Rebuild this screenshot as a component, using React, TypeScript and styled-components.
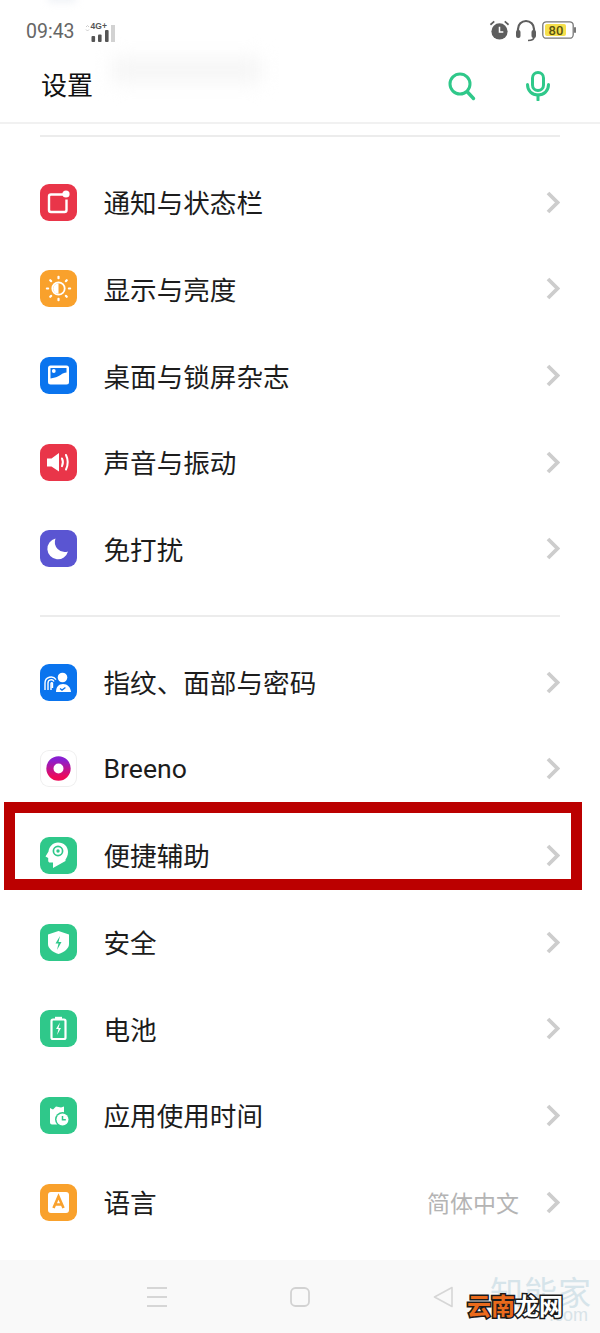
import React from "react";
import styled, { createGlobalStyle } from "styled-components";

const Global = createGlobalStyle`
  html, body { margin: 0; padding: 0; background: #fff; }
  * { box-sizing: border-box; }
`;

const FONT = `"Noto Sans CJK SC", "Noto Sans", sans-serif`;
const GREEN = "#2fc88a";

const Page = styled.div`
  position: relative;
  width: 600px;
  height: 1333px;
  overflow: hidden;
  display: flex;
  flex-direction: column;
  background: #fff;
  font-family: ${FONT};
`;
const StatusBar = styled.div`
  flex: none;
  height: 60px;
  padding: 2px 24px 0 26px;
  display: flex;
  align-items: center;
  justify-content: space-between;
`;
const StatusLeft = styled.div`
  display: flex;
  align-items: center;
  gap: 10px;
`;
const StatusRight = styled.div`
  display: flex;
  align-items: center;
  gap: 5px;
  margin-top: -2px;
`;
const Time = styled.span`
  font: 19.5px "Roboto", sans-serif;
  color: #666;
  margin-top: 1px;
`;
const Signal = styled.div`
  position: relative;
  width: 30px;
  height: 18px;
  margin-top: 1px;
`;
const SignalLabel = styled.span`
  position: absolute;
  left: 6px;
  top: -1px;
  font: bold 8.5px/9px "Liberation Sans", sans-serif;
  color: #555;
`;
const Header = styled.header`
  flex: none;
  height: 64px;
  padding: 0 50px 10px 41px;
  display: flex;
  align-items: center;
  justify-content: space-between;
  border-bottom: 2px solid #f1f1f1;
`;
const Title = styled.h1`
  margin: 0 0 4px;
  font-weight: 400;
  font-size: 26px;
  line-height: 36px;
  color: #111;
`;
const HeaderActions = styled.div`
  display: flex;
  align-items: center;
  gap: 50px;
`;
const Blur = styled.div`
  position: absolute;
  left: 112px;
  top: 58px;
  width: 150px;
  height: 24px;
  background: #f5f5f5;
  filter: blur(10px);
`;
const TopBlur = styled.div`
  position: absolute;
  left: 48px;
  top: -8px;
  width: 28px;
  height: 10px;
  background: #eef1f6;
  filter: blur(4px);
`;
const List = styled.main`
  flex: 1;
  min-height: 0;
  padding-top: 11px;
`;
const Section = styled.section`
  margin: 0 40px 22.5px;
  border-top: 2px solid #ececec;
  padding-top: 22px;
`;
const Row = styled.div`
  height: 86.67px;
  display: flex;
  align-items: center;
`;
const Tile = styled.div<{ $bg: string; $outlined?: boolean }>`
  width: 37px;
  height: 37px;
  flex: none;
  border-radius: 9px;
  background: ${(p) => p.$bg};
  box-shadow: ${(p) => (p.$outlined ? "inset 0 0 0 1px #efefef" : "none")};
  display: flex;
  align-items: center;
  justify-content: center;
  margin-right: 27px;
`;
const Label = styled.span<{ $latin?: boolean }>`
  flex: 1;
  font-size: 26.6px;
  line-height: 36px;
  color: #1c1c1c;
  margin-left: -0.5px;
  font-family: ${(p) => (p.$latin ? `"Roboto", sans-serif` : FONT)};
`;
const Value = styled.span`
  font-size: 23px;
  color: #b4b4b4;
  margin-right: 27px;
`;
const NavBar = styled.nav`
  flex: none;
  height: 73px;
  background: #f9f9f9;
  display: flex;
  align-items: center;
  padding: 0 0 0 147px;
  gap: 123px;
`;
const Highlight = styled.div`
  position: absolute;
  left: 4px;
  top: 802px;
  width: 578px;
  height: 88px;
  border: 11px solid #bb0000;
`;
const WatermarkPale = styled.div`
  position: absolute;
  left: 490px;
  top: 1271px;
  font-size: 33px;
  line-height: 40px;
  letter-spacing: 1px;
  color: #d6e4ea;
`;
const WatermarkUrl = styled.div`
  position: absolute;
  left: 549px;
  top: 1304px;
  font: 18px/22px "Liberation Sans", sans-serif;
  color: #d8e3e8;
`;
const Stamp = styled.div`
  position: absolute;
  left: 467px;
  top: 1288px;
  font-size: 24px;
  line-height: 34px;
  font-weight: 700;
  letter-spacing: 0;
  -webkit-text-stroke: 3px #1a1a1a;
  paint-order: stroke fill;
`;
const StampPart = styled.span<{ $c: string }>`
  color: ${(p) => p.$c};
`;

const W = "#fff";
const Svg: React.FC<{ children: React.ReactNode }> = ({ children }) => (
  <svg width="37" height="37" viewBox="0 0 37 37" fill="none">{children}</svg>
);

const Chevron = () => (
  <svg width="14" height="23" viewBox="0 0 14 23" fill="none">
    <path d="M2 2l9.500 9.500L2 21" stroke="#cdcdcd" strokeWidth="3.800" />
  </svg>
);

const sunRays = [0, 45, 90, 135, 180, 225, 270, 315];

const icons = {
  notify: (
    <Svg>
      <path d="M23 10.500H11a2 2 0 0 0-2 2V26a2 2 0 0 0 2 2h13.500a2 2 0 0 0 2-2V15.500" stroke={W} strokeWidth="2.400" />
      <circle cx="26" cy="10" r="3.600" fill={W} />
    </Svg>
  ),
  display: (
    <Svg>
      <circle cx="18.500" cy="18.500" r="6.200" stroke={W} strokeWidth="1.800" />
      <path d="M18.500 13.200a5.300 5.300 0 0 0 0 10.600z" fill={W} />
      {sunRays.map((a) => (
        <rect key={a} x="17.400" y="5.800" width="2.200" height="3.400" rx="1" fill={W} transform={`rotate(${a} 18.500 18.500)`} />
      ))}
    </Svg>
  ),
  wallpaper: (
    <Svg>
      <rect x="8" y="8.500" width="21" height="19" rx="2.500" fill={W} />
      <path d="M10.500 11H26.500V15.500C22 15.500 20 19.500 15 20.500L10.500 21.500Z" fill="#0a74ee" />
      <circle cx="13.800" cy="14" r="1.900" fill={W} />
    </Svg>
  ),
  sound: (
    <Svg>
      <path d="M7 14.500h4.500L19 9v18.500L11.500 22.500H7z" fill={W} />
      <path d="M22 14.500c1.300 2.600 1.300 5 0 7.600" stroke={W} strokeWidth="2" strokeLinecap="round" />
      <path d="M26 11c2.300 4.800 2.300 9.600 0 14.500" stroke={W} strokeWidth="2" strokeLinecap="round" />
    </Svg>
  ),
  moon: (
    <Svg>
      <path d="M15.500 8.500A10.500 10.500 0 1 0 28 21.500 10 10 0 0 1 15.500 8.500z" fill={W} />
    </Svg>
  ),
  finger: (
    <Svg>
      <circle cx="22.500" cy="13.500" r="4.800" fill={W} />
      <path d="M16 28c0-5 2.500-8 7-8s7.500 3 8 8z" fill={W} />
      <path d="M20 24.500l2 1.600 3.400-2.600" stroke="#0a74ee" strokeWidth="1.300" />
      <path d="M5 26v-7a6 6 0 0 1 11-3.300" stroke={W} strokeWidth="1.400" />
      <path d="M8 26v-7a3.200 3.200 0 0 1 6-1.500" stroke={W} strokeWidth="1.400" />
      <path d="M11 26v-6.500a.8.8 0 0 1 1.500-.3V24" stroke={W} strokeWidth="1.400" />
    </Svg>
  ),
  breeno: (
    <svg width="37" height="37" viewBox="0 0 37 37" fill="none">
      <defs>
        <linearGradient id="brG" x1="0" y1="0" x2="0" y2="1">
          <stop offset="0" stopColor="#8a1fd0" />
          <stop offset="1" stopColor="#ee0a58" />
        </linearGradient>
      </defs>
      <circle cx="18.500" cy="18.500" r="8.600" stroke="url(#brG)" strokeWidth="7.200" />
    </svg>
  ),
  assist: (
    <Svg>
      <path d="M18 5.500c6 0 10 4 10 9.500 0 3.800-1.500 6-2.500 7.500v1.500L13 31v-5.500H10c-1 0-1.800-.8-1.800-1.800V21L5.500 19.500l3-5C9 9.500 13 5.500 18 5.500z" fill={W} />
      <circle cx="18" cy="14" r="4.600" stroke={GREEN} strokeWidth="1.700" />
      <circle cx="18" cy="14" r="1.700" fill={GREEN} />
    </Svg>
  ),
  shield: (
    <Svg>
      <path d="M18.500 7L29 10.500V20c0 4.500-4.500 8-10.500 10C12.500 28 8 24.500 8 20v-9.500z" fill={W} />
      <path d="M20 12l-4.500 7.500h3L17 26l4.500-8h-3z" fill={GREEN} />
    </Svg>
  ),
  battery: (
    <Svg>
      <rect x="15" y="6.800" width="7" height="2.500" fill={W} />
      <rect x="11.500" y="9.500" width="14" height="19.500" rx="1.500" stroke={W} strokeWidth="2.200" />
      <path d="M20 12.500l-4 6.500h2.500l-1.500 6 4-7h-2.500z" fill={W} />
    </Svg>
  ),
  usage: (
    <Svg>
      <path d="M10 11l3 1.500 3-3 5 1 3-1v8a7 7 0 0 0-6 10h-6a2 2 0 0 1-2-2z" fill={W} />
      <circle cx="22.500" cy="22.500" r="7.500" fill={GREEN} />
      <circle cx="22.500" cy="22.500" r="6" fill={W} />
      <path d="M22.500 19v3.800h3.300" stroke={GREEN} strokeWidth="1.500" />
    </Svg>
  ),
  language: (
    <Svg>
      <rect x="8" y="8" width="21" height="21" rx="3" fill={W} />
      <path d="M13.500 24l5-11.500 5 11.500M15.200 20.500h6.600" stroke="#f9a12c" strokeWidth="2.600" />
    </Svg>
  ),
};

type Item = { icon: keyof typeof icons; bg: string; label: string; value?: string; latin?: boolean; outlined?: boolean };

const first: Item[] = [
  { icon: "notify", bg: "#e93549", label: "通知与状态栏" },
  { icon: "display", bg: "#f9a12c", label: "显示与亮度" },
  { icon: "wallpaper", bg: "#0a74ee", label: "桌面与锁屏杂志" },
  { icon: "sound", bg: "#e93549", label: "声音与振动" },
  { icon: "moon", bg: "#5a55d2", label: "免打扰" },
];
const second: Item[] = [
  { icon: "finger", bg: "#0a74ee", label: "指纹、面部与密码" },
  { icon: "breeno", bg: "#fff", label: "Breeno", latin: true, outlined: true },
  { icon: "assist", bg: GREEN, label: "便捷辅助" },
  { icon: "shield", bg: GREEN, label: "安全" },
  { icon: "battery", bg: GREEN, label: "电池" },
  { icon: "usage", bg: GREEN, label: "应用使用时间" },
  { icon: "language", bg: "#f9a12c", label: "语言", value: "简体中文" },
];

const Rows: React.FC<{ items: Item[] }> = ({ items }) => (
  <Section>
    {items.map((it) => (
      <Row key={it.label}>
        <Tile $bg={it.bg} $outlined={it.outlined}>{icons[it.icon]}</Tile>
        <Label $latin={it.latin}>{it.label}</Label>
        {it.value && <Value>{it.value}</Value>}
        <Chevron />
      </Row>
    ))}
  </Section>
);

export default function App() {
  return (
    <Page>
      <Global />
      <TopBlur />
      <Blur />
      <StatusBar>
        <StatusLeft>
          <Time>09:43</Time>
          <Signal>
            <SignalLabel>4G+</SignalLabel>
            <svg width="30" height="18" viewBox="0 0 30 18">
              <path d="M1 3l1.500-1.500L4 3M1 5.500L2.500 7 4 5.500" stroke="#c4c4c4" strokeWidth="0.900" fill="none" />
              <rect x="6.500" y="12" width="3.600" height="6" rx="1" fill="#555" />
              <rect x="13" y="10.500" width="3.600" height="7.500" rx="1" fill="#555" />
              <rect x="20" y="6" width="3.600" height="12" rx="1" fill="#555" />
              <rect x="26" y="1" width="4" height="17" fill="#d2d2d2" />
            </svg>
          </Signal>
        </StatusLeft>
        <StatusRight>
          <svg width="21" height="22" viewBox="0 0 22 22">
            <circle cx="11" cy="12.500" r="8.500" fill="#5e5e5e" />
            <path d="M11 7.500v5.500h4" stroke="#fff" strokeWidth="1.600" fill="none" />
            <path d="M1.500 5.500L5.500 2M20.500 5.500L16.500 2" stroke="#5e5e5e" strokeWidth="1.800" />
          </svg>
          <svg width="22" height="23" viewBox="0 0 22 23" fill="none">
            <path d="M3 13V10a8 8 0 0 1 16 0v3" stroke="#5e5e5e" strokeWidth="2.200" />
            <rect x="1" y="11" width="4.500" height="8" rx="2" fill="#5e5e5e" />
            <rect x="16.500" y="11" width="4.500" height="8" rx="2" fill="#5e5e5e" />
            <path d="M19 18c0 2.500-2 3.500-6 3.500" stroke="#5e5e5e" strokeWidth="1.600" />
          </svg>
          <svg width="34" height="18" viewBox="0 0 34 18">
            <rect x="0.800" y="0.800" width="30.400" height="16.400" rx="3.500" fill="none" stroke="#777" strokeWidth="1.300" />
            <rect x="3" y="3" width="21" height="12" rx="2" fill="#f6e04c" />
            <rect x="32" y="6" width="2" height="6" rx="1" fill="#777" />
            <text x="14" y="14" textAnchor="middle" fontFamily="Roboto, sans-serif" fontWeight="500" fontSize="13" fill="#5a5210">80</text>
          </svg>
        </StatusRight>
      </StatusBar>
      <Header>
        <Title>设置</Title>
        <HeaderActions>
          <svg width="28" height="29" viewBox="0 0 28 29" fill="none">
            <circle cx="12" cy="12" r="10" stroke={GREEN} strokeWidth="3" />
            <path d="M19.500 20l6 6.500" stroke={GREEN} strokeWidth="3.400" strokeLinecap="round" />
          </svg>
          <svg width="24" height="30" viewBox="0 0 24 30" fill="none">
            <rect x="6.500" y="1.500" width="11" height="18" rx="5.500" stroke={GREEN} strokeWidth="3" />
            <path d="M1.500 13.500c0 6.500 4.500 10.500 10.500 10.500s10.500-4 10.500-10.500" stroke={GREEN} strokeWidth="3" strokeLinecap="round" />
            <path d="M12 24v5" stroke={GREEN} strokeWidth="3" strokeLinecap="round" />
          </svg>
        </HeaderActions>
      </Header>
      <List>
        <Rows items={first} />
        <Rows items={second} />
      </List>
      <NavBar>
        <svg width="20" height="20" viewBox="0 0 20 20">
          <path d="M0 1h20M0 10h20M0 19h20" stroke="#d6d6d6" strokeWidth="1.800" />
        </svg>
        <svg width="20" height="20" viewBox="0 0 20 20" fill="none">
          <rect x="1" y="1" width="18" height="18" rx="4.500" stroke="#d2d2d2" strokeWidth="1.800" />
        </svg>
        <svg width="20" height="22" viewBox="0 0 20 22" fill="none">
          <path d="M19 1.500L1.500 11 19 20.500z" stroke="#d6d6d6" strokeWidth="1.600" strokeLinejoin="round" />
        </svg>
      </NavBar>
      <Highlight />
      <WatermarkPale>知能家</WatermarkPale>
      <WatermarkUrl>.com</WatermarkUrl>
      <Stamp>
        <StampPart $c="#ea6a1c">云南</StampPart>
        <StampPart $c="#fff">龙网</StampPart>
      </Stamp>
    </Page>
  );
}
